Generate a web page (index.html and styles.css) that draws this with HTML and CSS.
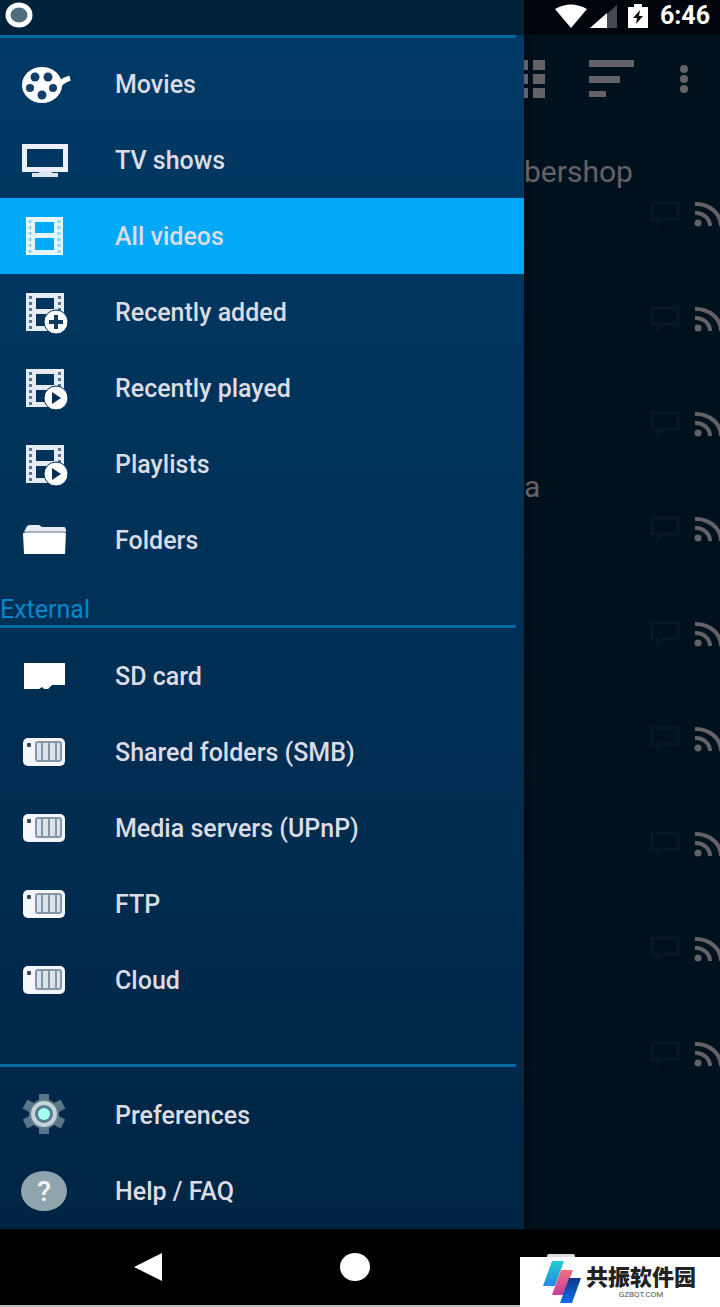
FILE: index.html
```html
<!DOCTYPE html>
<html lang="en">
<head>
    <meta charset="UTF-8">
    <meta name="viewport" content="width=device-width, initial-scale=1.0">
    <title>All videos</title>
    <link rel="stylesheet" href="styles.css">
</head>
<body>
    <!-- shared icons -->
    <svg width="0" height="0" class="sprite" aria-hidden="true">
        <symbol id="film" viewBox="0 0 48 48">
            <path fill="currentColor" fill-rule="evenodd" d="M4 5h38v38H4z M14 10v11h18V10z M14 26v12h18V26z"/>
            <path stroke="#5a7590" stroke-width="3" stroke-dasharray="3 3" d="M8.500 8v34M37.500 8v34"/>
        </symbol>
        <symbol id="film-play" viewBox="0 0 48 48">
            <use href="#film"/>
            <circle cx="34" cy="34" r="12" fill="#fff" stroke="#002f57"/>
            <path fill="#002f57" d="M30 28v12l9-6z"/>
        </symbol>
        <symbol id="server" viewBox="0 0 48 48">
            <rect x="1" y="10" width="42" height="28" rx="5" fill="#f4f6fb"/>
            <rect x="5" y="15" width="4" height="4" rx="1" fill="#334657"/>
            <rect x="14" y="14" width="25" height="19" rx="2" fill="#dce3eb" stroke="#8496a6" stroke-width="2"/>
            <path stroke="#8496a6" stroke-width="2" d="M20 14v18M27 14v18M34 14v18"/>
        </symbol>
        <symbol id="comment" viewBox="0 0 30 26">
            <path fill="none" stroke="currentColor" stroke-width="3" d="M2 2h26v16H13l-5 5v-5H2z"/>
        </symbol>
        <symbol id="rss" viewBox="0 0 26 26">
            <g fill="none" stroke="currentColor" stroke-width="4">
                <path d="M1 3a25 22 0 0 1 26 22"/>
                <path d="M1 12a14 13 0 0 1 15 13"/>
            </g>
            <circle cx="4" cy="22" r="3.500" fill="currentColor"/>
        </symbol>
    </svg>

    <div class="phone">
        <header class="status">
            <div class="status-left">
                <svg width="32" height="30" viewBox="0 0 32 30"><ellipse cx="16" cy="15" rx="11" ry="10" fill="#526e7e" stroke="#fff" stroke-width="5"/></svg>
            </div>
            <div class="status-right">
                <svg width="34" height="26" viewBox="0 0 34 26"><path fill="#fff" d="M1 6q16-9 32 0L17 25z"/></svg>
                <svg width="28" height="26" viewBox="0 0 28 26"><path fill="#45484d" d="M0 25L27 2v23z"/><path fill="#fff" d="M0 25L17 10v15z"/></svg>
                <svg class="battery" width="20" height="26" viewBox="0 0 20 26"><path fill="#fff" d="M6 1h8v3h6v21H0V4h6z"/><path fill="#111" d="M12 7l-7 8h4l-1 6 7-8h-4z"/></svg>
                <span class="time">6:46</span>
            </div>
        </header>

        <div class="screen">
            <nav class="drawer">
                <ul class="menu">
                    <li><a href="#">
                        <svg viewBox="0 0 48 48">
                            <ellipse cx="20" cy="25" rx="20" ry="18" fill="#fff"/>
                            <path fill="none" stroke="#fff" stroke-width="5" d="M34 30q4-9 14-12"/>
                            <g fill="#123f68"><circle cx="13" cy="17" r="4.500"/><circle cx="26" cy="17" r="4.500"/><circle cx="8" cy="28" r="4"/><circle cx="31" cy="28" r="4"/><circle cx="20" cy="35" r="4.500"/></g>
                        </svg>
                        <span>Movies</span></a></li>
                    <li><a href="#">
                        <svg viewBox="0 0 48 48">
                            <rect x="2.500" y="10.500" width="41" height="23" fill="none" stroke="#eef0ff" stroke-width="5"/>
                            <path fill="#dde5ef" d="M17 35h13v2h6v4H10v-4h7z"/>
                        </svg>
                        <span>TV shows</span></a></li>
                    <li><a href="#" class="active">
                        <svg viewBox="0 0 48 48">
                            <path fill="#e4f5ff" fill-rule="evenodd" d="M4 5h37v38H4z M13 10v11h19V10z M13 26v12h19V26z"/>
                            <path stroke="#8ad5fa" stroke-width="3" stroke-dasharray="3 3" d="M8 8v34M37 8v34"/>
                        </svg>
                        <span>All videos</span></a></li>
                    <li><a href="#">
                        <svg viewBox="0 0 48 48">
                            <use href="#film"/>
                            <circle cx="34" cy="34" r="12" fill="#fff" stroke="#002f57"/>
                            <path stroke="#123d63" stroke-width="4" d="M27 34h14M34 27v14"/>
                        </svg>
                        <span>Recently added</span></a></li>
                    <li><a href="#"><svg><use href="#film-play"/></svg><span>Recently played</span></a></li>
                    <li><a href="#"><svg><use href="#film-play"/></svg><span>Playlists</span></a></li>
                    <li><a href="#">
                        <svg viewBox="0 0 48 48">
                            <path fill="#e9edf3" d="M4 12q1-3 4-3h9l3 2h22q2 0 2 5H2z"/>
                            <path stroke="#a7b2bf" stroke-width="2" d="M3 16h40"/>
                            <path fill="#fff" d="M1 17h43l-1 21H2z"/>
                        </svg>
                        <span>Folders</span></a></li>
                </ul>

                <h2>External</h2>
                <ul class="menu">
                    <li><a href="#"><svg viewBox="0 0 48 48"><path fill="#fff" d="M2 11h41v22H30l-4 4h-4l-2-2-3 2H2z"/></svg><span>SD card</span></a></li>
                    <li><a href="#"><svg><use href="#server"/></svg><span>Shared folders (SMB)</span></a></li>
                    <li><a href="#"><svg><use href="#server"/></svg><span>Media servers (UPnP)</span></a></li>
                    <li><a href="#"><svg><use href="#server"/></svg><span>FTP</span></a></li>
                    <li><a href="#"><svg><use href="#server"/></svg><span>Cloud</span></a></li>
                </ul>

                <ul class="menu menu-bottom">
                    <li><a href="#">
                        <svg viewBox="0 0 48 48">
                            <g stroke="#587687" stroke-width="10"><path d="M22 3v40M3 13l38 20M3 33l38-20"/></g>
                            <circle cx="22" cy="23" r="15" fill="#607d8b"/>
                            <circle cx="22" cy="23" r="11" fill="#527d8c" stroke="#c7d3d9" stroke-width="4"/>
                            <circle cx="22" cy="23" r="6" fill="#a4fff0"/>
                        </svg>
                        <span>Preferences</span></a></li>
                    <li><a href="#">
                        <svg viewBox="0 0 48 48">
                            <ellipse cx="22" cy="24" rx="23" ry="20" fill="#90a4ae"/>
                            <text x="22" y="34" text-anchor="middle" class="question">?</text>
                        </svg>
                        <span>Help / FAQ</span></a></li>
                </ul>
            </nav>

            <main class="content">
                <div class="toolbar">
                    <button aria-label="Grid view"><svg width="22" height="40" viewBox="0 0 22 40"><path fill="currentColor" d="M0 1h4v10H0zM9 1h12v10H9zM0 15h4v10H0zM9 15h12v10H9zM0 29h4v10H0zM9 29h12v10H9z"/></svg></button>
                    <button aria-label="Sort"><svg width="46" height="40" viewBox="0 0 46 40"><path fill="currentColor" d="M0 1h45v7H0zM0 17h31v7H0zM0 32h17v6H0z"/></svg></button>
                    <button aria-label="More"><svg width="12" height="30" viewBox="0 0 12 30"><g fill="currentColor"><circle cx="6" cy="5" r="4"/><circle cx="6" cy="15" r="4"/><circle cx="6" cy="25" r="4"/></g></svg></button>
                </div>
                <ul class="videos">
                    <li><span class="title">bershop</span><span class="marks"><svg class="comment"><use href="#comment"/></svg><svg class="rss"><use href="#rss"/></svg></span></li>
                    <li><span class="title"></span><span class="marks"><svg class="comment"><use href="#comment"/></svg><svg class="rss"><use href="#rss"/></svg></span></li>
                    <li><span class="title"></span><span class="marks"><svg class="comment"><use href="#comment"/></svg><svg class="rss"><use href="#rss"/></svg></span></li>
                    <li><span class="title">a</span><span class="marks"><svg class="comment"><use href="#comment"/></svg><svg class="rss"><use href="#rss"/></svg></span></li>
                    <li><span class="title"></span><span class="marks"><svg class="comment"><use href="#comment"/></svg><svg class="rss"><use href="#rss"/></svg></span></li>
                    <li><span class="title"></span><span class="marks"><svg class="comment"><use href="#comment"/></svg><svg class="rss"><use href="#rss"/></svg></span></li>
                    <li><span class="title"></span><span class="marks"><svg class="comment"><use href="#comment"/></svg><svg class="rss"><use href="#rss"/></svg></span></li>
                    <li><span class="title"></span><span class="marks"><svg class="comment"><use href="#comment"/></svg><svg class="rss"><use href="#rss"/></svg></span></li>
                    <li><span class="title"></span><span class="marks"><svg class="comment"><use href="#comment"/></svg><svg class="rss"><use href="#rss"/></svg></span></li>
                </ul>
            </main>
        </div>

        <footer class="navbar">
            <button aria-label="Back"><svg width="30" height="28" viewBox="0 0 30 28"><path fill="#fff" d="M0 14L28 0v28z"/></svg></button>
            <button aria-label="Home"><svg width="30" height="28" viewBox="0 0 30 28"><ellipse cx="15" cy="14" rx="15" ry="14" fill="#fff"/></svg></button>
            <button aria-label="Recent apps"><svg width="30" height="28" viewBox="0 0 30 28"><rect x="1" y="1" width="28" height="26" rx="2" fill="#ddd"/></svg></button>
        </footer>

        <div class="watermark">
            <svg width="38" height="44" viewBox="0 0 38 44">
                <defs>
                    <linearGradient id="cyan" x1="0" y1="0" x2="0" y2="1"><stop offset="0" stop-color="#20cfcf"/><stop offset="1" stop-color="#2389e8"/></linearGradient>
                    <linearGradient id="pink" x1="0" y1="0" x2="0" y2="1"><stop offset="0" stop-color="#f0707c"/><stop offset="1" stop-color="#c63ca0"/></linearGradient>
                    <linearGradient id="blue" x1="0" y1="0" x2="0" y2="1"><stop offset="0" stop-color="#0c3a86"/><stop offset="1" stop-color="#0a6df0"/></linearGradient>
                </defs>
                <path fill="url(#cyan)" d="M9 1h12l-9 25H0z"/>
                <path fill="url(#pink)" d="M18 10h12l-9 25H9z"/>
                <path fill="url(#blue)" d="M26 18h12l-9 25H17z"/>
            </svg>
            <div class="watermark-text">
                <strong lang="zh">共振软件园</strong>
                <small>GZBQT.COM</small>
            </div>
        </div>
    </div>
</body>
</html>
```
FILE: styles.css
```css
* {
    box-sizing: border-box;
}
body {
    margin: 0;
    background-color: #000;
    font-family: Roboto, "Liberation Sans", sans-serif;
    font-size: 25px;
    color: #dcdce4;
}
ul {
    list-style: none;
    margin: 0;
    padding: 0;
}
svg {
    display: block;
}
button {
    padding: 0;
    border: none;
    background: none;
    color: inherit;
    cursor: pointer;
}
.sprite {
    position: absolute;
}
.phone {
    position: relative;
    border-bottom: 2px solid #bbb;
}
.status {
    display: flex;
    height: 35px;
}
.status-left {
    flex: 0 0 524px;
    padding-left: 3px;
    background-color: #00213a;
}
.status-right {
    flex: 1;
    display: flex;
    align-items: center;
    justify-content: flex-end;
    gap: 2px;
    padding: 0 10px 4px 0;
    background-color: #01050b;
}
.battery {
    margin: 0 10px 0 8px;
}
.time {
    color: #fff;
    font-weight: bold;
    line-height: 28px;
}
.screen {
    display: flex;
}

/* drawer */
.drawer {
    flex: 0 0 524px;
    background: linear-gradient(#003a66, #002544);
}
.drawer .menu::before,
.drawer h2::after {
    content: "";
    display: block;
    height: 3px;
    margin-right: 8px;
    background-color: #0068a3;
}
.drawer .menu:first-child::before {
    margin-bottom: 8px;
}
.drawer h2 + .menu::before {
    display: none;
}
.menu a {
    display: flex;
    align-items: center;
    gap: 45px;
    height: 76px;
    padding-left: 22px;
    color: inherit;
    font-weight: 500;
    text-decoration: none;
    white-space: nowrap;
}
.menu svg {
    flex: none;
    width: 48px;
    height: 48px;
    color: #e6eaf2;
    overflow: visible;
}
.menu a.active {
    background-color: #03a9f9;
}
.drawer h2 {
    margin: 0;
    padding-top: 16px;
    color: #0288cc;
    font-size: 25px;
    font-weight: normal;
    line-height: 31px;
}
.drawer h2 + .menu {
    padding-top: 10px;
    padding-bottom: 46px;
}
.drawer .menu-bottom::before {
    margin-bottom: 10px;
}
.question {
    font-size: 28px;
    font-weight: 500;
    fill: #f4f6f7;
}

/* video list behind the drawer */
.content {
    flex: 1;
    min-width: 0;
    overflow: hidden;
    background: linear-gradient(to right, #000b14, #00111e 10px);
    color: #646266;
}
.toolbar {
    display: flex;
    align-items: center;
    justify-content: space-between;
    height: 88px;
    padding-right: 30px;
}
.videos {
    padding-top: 16px;
}
.videos li {
    display: flex;
    flex-direction: column;
    justify-content: space-between;
    height: 105px;
    padding: 16px 0;
    border-bottom: 1px solid #021522;
}
.title {
    min-height: 34px;
    font-size: 30px;
    line-height: 34px;
}
.marks {
    display: flex;
    justify-content: flex-end;
    gap: 14px;
}
.comment {
    width: 30px;
    height: 26px;
    color: #081924;
}
.rss {
    width: 26px;
    height: 26px;
}

.navbar {
    display: grid;
    grid-template-columns: repeat(3, 1fr);
    align-items: center;
    justify-items: center;
    height: 76px;
    padding: 0 56px 0 46px;
    background-color: #000;
}
.watermark {
    position: absolute;
    right: 0;
    bottom: -2px;
    display: flex;
    gap: 5px;
    width: 200px;
    height: 50px;
    padding: 3px 0 0 23px;
    background-color: #fff;
    color: #222;
}
.watermark-text {
    display: flex;
    flex-direction: column;
    align-items: center;
}
.watermark strong {
    font-family: "Noto Sans CJK SC", sans-serif;
    font-size: 22px;
    font-weight: 900;
    line-height: 30px;
}
.watermark small {
    color: #555;
    font-size: 8px;
    line-height: 10px;
}
```
